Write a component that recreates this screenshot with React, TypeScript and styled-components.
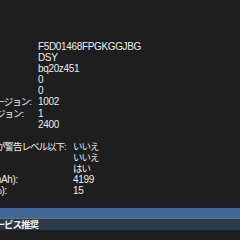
import React from 'react'
import styled, { createGlobalStyle } from 'styled-components'

const GlobalStyle = createGlobalStyle`
  html, body {
    margin: 0;
    padding: 0;
    background: #1e1e1e;
  }
`

const Window = styled.div`
  width: 240px;
  height: 240px;
  overflow: hidden;
  box-sizing: border-box;
  padding-top: 41px;
  background: #1e1e1e;
  color: #ececec;
  font-family: "Liberation Sans", "Noto Sans CJK JP", sans-serif;
  font-size: 10px;
  letter-spacing: -0.35px;
`

// the report is wider than the pane and scrolled to the right
const Scroller = styled.div`
  margin-left: -92px;
  width: 332px;
`

const Heading = styled.div`
  height: 11.1px;
  line-height: 11.1px;
  font-size: 9.5px;
  letter-spacing: -1px;
  white-space: nowrap;
`

const Section = styled.div<{ $labelWidth: number }>`
  display: grid;
  grid-template-columns: ${props => props.$labelWidth}px 1fr;
  grid-auto-rows: 11.1px;
  line-height: 11.1px;
  padding-left: 20px;
`

const Label = styled.span`
  font-size: 9.5px;
  letter-spacing: -1px;
  white-space: nowrap;
`

const Latin = styled.span`
  font-size: 10px;
  letter-spacing: -0.35px;
`

const Value = styled.span<{ $jp?: boolean }>`
  font-size: ${props => (props.$jp ? '9.5px' : '10px')};
  letter-spacing: ${props => (props.$jp ? '-1px' : '-0.35px')};
  white-space: nowrap;
`

const SelectedRow = styled.div`
  height: 11.1px;
  box-sizing: border-box;
  background: #42689a;
  border-top: 1px solid #15243a;
  border-bottom: 1px solid #66727f;
`

const Highlight = styled.span`
  font-size: 9.5px;
  letter-spacing: -1px;
  font-weight: 700;
  color: #f4f4f4;
  background: #2c3949;
  white-space: nowrap;
`

// kana set tighter than the latin runs inside a label
const renderLabel = (text: string) => {
  const parts = text.match(/[ -~]+|[^ -~]+/g) || []
  return parts.map((part, i) =>
    /^[ -~]+$/.test(part) && part !== ':' ? <Latin key={i}>{part}</Latin> : part
  )
}

const modelInfo: [string, string][] = [
  ['シリアル番号:', 'F5D01468FPGKGGJBG'],
  ['製造元:', 'DSY'],
  ['デバイス名:', 'bq20z451'],
  ['Pack Lot Code:', '0'],
  ['PCB Lot Code:', '0'],
  ['ファームウェアバージョン:', '1002'],
  ['ハードウェアリビジョン:', '1'],
  ['セルリビジョン:', '2400'],
]

const chargeInfo: [string, string, boolean][] = [
  ['バッテリーの残量が警告レベル以下:', 'いいえ', true],
  ['完全充電済み:', 'いいえ', true],
  ['充電中:', 'はい', true],
  ['満充電時の容量 (mAh):', '4199', false],
  ['バッテリー残量 (%):', '15', false],
]

export default function App() {
  return (
    <Window>
      <GlobalStyle />
      <Scroller>
        <Section $labelWidth={110}>
          {modelInfo.map(([label, value]) => (
            <React.Fragment key={label}>
              <Label>{renderLabel(label)}</Label>
              <Value>{value}</Value>
            </React.Fragment>
          ))}
        </Section>
        <Heading>充電情報:</Heading>
        <Section $labelWidth={145}>
          {chargeInfo.map(([label, value, jp]) => (
            <React.Fragment key={label}>
              <Label>{renderLabel(label)}</Label>
              <Value $jp={jp}>{value}</Value>
            </React.Fragment>
          ))}
        </Section>
        <Heading>状態情報:</Heading>
      </Scroller>
      <SelectedRow />
      <Scroller>
        <Section $labelWidth={59}>
          <Label>状態:</Label>
          <Highlight>サービス推奨</Highlight>
        </Section>
      </Scroller>
    </Window>
  )
}
